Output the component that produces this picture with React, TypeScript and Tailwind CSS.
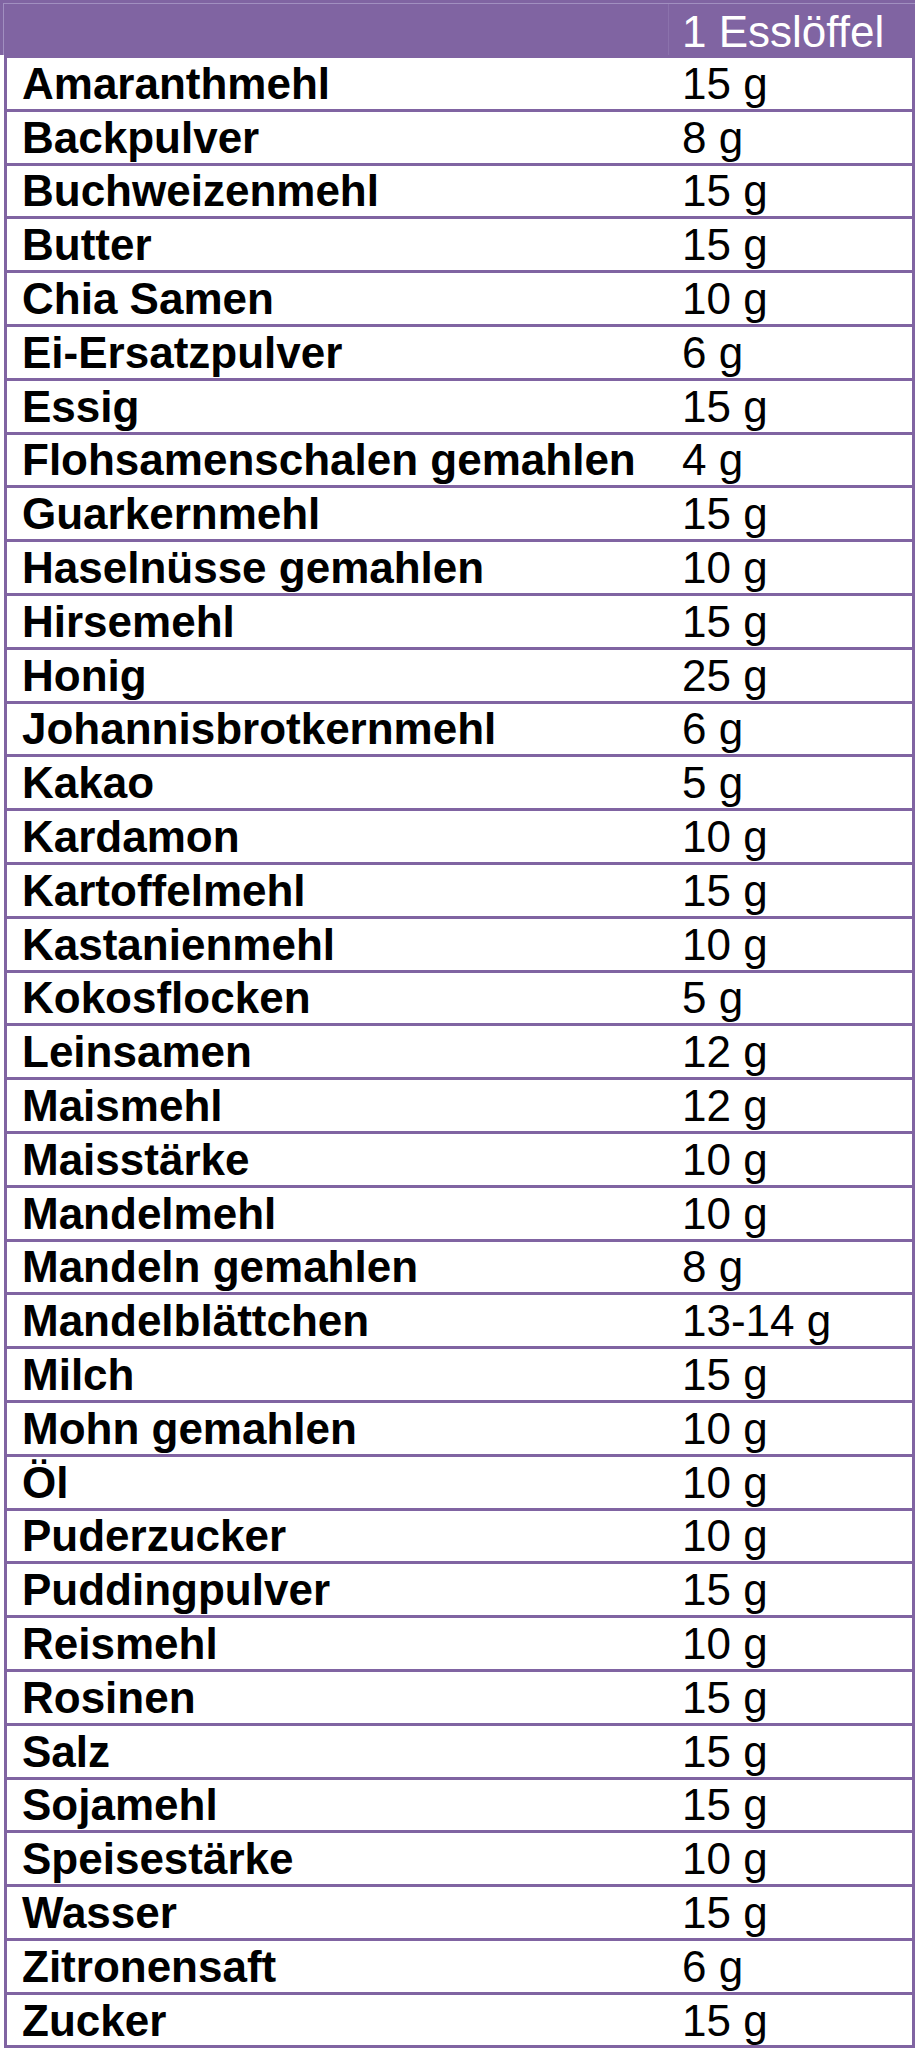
import * as React from 'react';

const rows: [string, string][] = [
  ['Amaranthmehl', '15 g'],
  ['Backpulver', '8 g'],
  ['Buchweizenmehl', '15 g'],
  ['Butter', '15 g'],
  ['Chia Samen', '10 g'],
  ['Ei-Ersatzpulver', '6 g'],
  ['Essig', '15 g'],
  ['Flohsamenschalen gemahlen', '4 g'],
  ['Guarkernmehl', '15 g'],
  ['Haselnüsse gemahlen', '10 g'],
  ['Hirsemehl', '15 g'],
  ['Honig', '25 g'],
  ['Johannisbrotkernmehl', '6 g'],
  ['Kakao', '5 g'],
  ['Kardamon', '10 g'],
  ['Kartoffelmehl', '15 g'],
  ['Kastanienmehl', '10 g'],
  ['Kokosflocken', '5 g'],
  ['Leinsamen', '12 g'],
  ['Maismehl', '12 g'],
  ['Maisstärke', '10 g'],
  ['Mandelmehl', '10 g'],
  ['Mandeln gemahlen', '8 g'],
  ['Mandelblättchen', '13-14 g'],
  ['Milch', '15 g'],
  ['Mohn gemahlen', '10 g'],
  ['Öl', '10 g'],
  ['Puderzucker', '10 g'],
  ['Puddingpulver', '15 g'],
  ['Reismehl', '10 g'],
  ['Rosinen', '15 g'],
  ['Salz', '15 g'],
  ['Sojamehl', '15 g'],
  ['Speisestärke', '10 g'],
  ['Wasser', '15 g'],
  ['Zitronensaft', '6 g'],
  ['Zucker', '15 g'],
];

export default function App() {
  return (
    <div className="w-[915px] bg-white font-['Liberation_Sans'] text-black">
      {/* header */}
      <div className="h-[55px] bg-[#8064a2] pt-[3px] pl-[3px]">
        <div className="flex h-full border-t border-l border-[#a18fc0]">
          <div className="w-[665px] border-r border-[#8b72ac]" />
          <div className="pl-[13px] pt-[6px] text-[44px] leading-[44px] text-white">
            1 Esslöffel
          </div>
        </div>
      </div>

      {/* body */}
      <div className="ml-[4px] w-[911px] border-x-[3px] border-b-[3px] border-[#8064a2]">
        {rows.map(([name, amount]) => (
          <div
            key={name}
            className="flex h-[53.8px] items-center border-t-[3px] border-[#8064a2] pt-[1px] text-[44px] leading-[44px]"
          >
            <div className="w-[675px] pl-[15px] font-bold">{name}</div>
            <div>{amount}</div>
          </div>
        ))}
      </div>
    </div>
  );
}
